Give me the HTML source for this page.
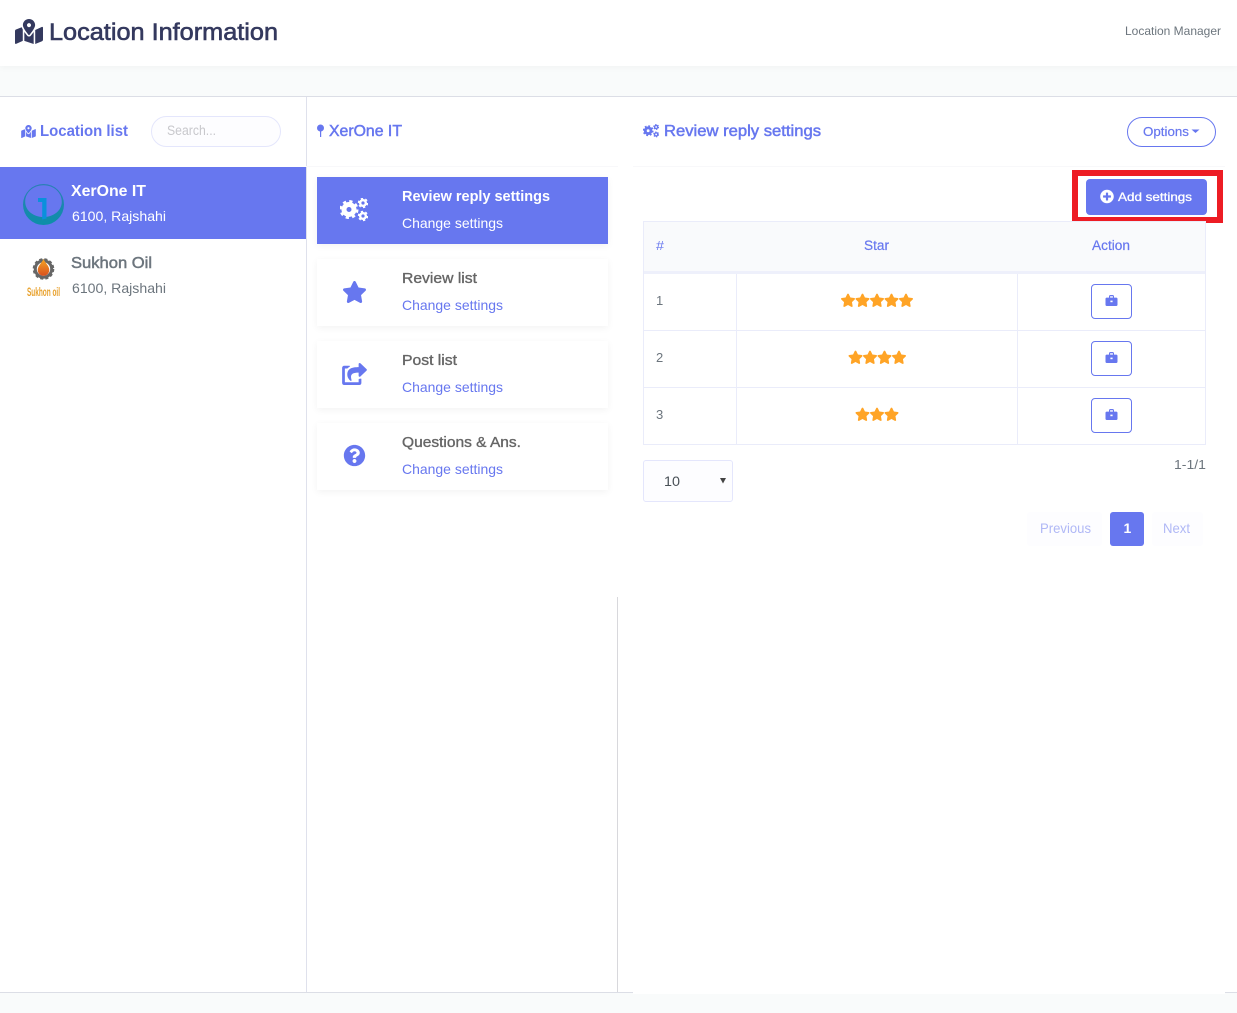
<!DOCTYPE html>
<html lang="en">
<head>
<meta charset="utf-8">
<title>Location Information</title>
<style>
html,body{margin:0;padding:0;background:#f9fbfb}
#page{position:relative;width:1237px;height:1013px;overflow:hidden;background:#f9fbfb;font-family:"Liberation Sans",sans-serif}
.b{position:absolute;box-sizing:border-box}
.card{background:#fff;box-shadow:0 2px 7px rgba(0,0,0,.05)}
svg{position:absolute;left:0;top:0}
text{font-family:"Liberation Sans",sans-serif}
.s{stroke:currentColor;stroke-width:.35px}
</style>
</head>
<body>
<div id="page">
  <div class="b" style="left:0;top:0;width:1237px;height:66px;background:#fff;box-shadow:0 2px 6px rgba(0,0,0,.03)"></div>
  <div class="b" style="left:0;top:96px;width:1237px;height:897px;background:#fff;border-top:1px solid #dcdee6;border-bottom:1px solid #dcdee6"></div>
  <div class="b" style="left:633px;top:97px;width:592px;height:897px;background:#fff"></div>
  <div class="b" style="left:306px;top:97px;width:1px;height:895px;background:#dfe1ec"></div>
  <div class="b" style="left:617px;top:597px;width:1px;height:395px;background:#d8d8dc"></div>
  <div class="b" style="left:306px;top:166px;width:312px;height:1px;background:#f8f8fa"></div>
  <div class="b" style="left:633px;top:166px;width:592px;height:1px;background:#f8f8fa"></div>

  <div class="b" style="left:151px;top:116px;width:130px;height:31px;border:1px solid #e4e6fc;border-radius:16px;background:#fdfdff"></div>
  <div class="b" style="left:0;top:167px;width:306px;height:72px;background:#6777ef"></div>

  <div class="b" style="left:317px;top:177px;width:291px;height:67px;background:#6777ef;box-shadow:0 2px 7px rgba(0,0,0,.05)"></div>
  <div class="b card" style="left:317px;top:259px;width:291px;height:67px"></div>
  <div class="b card" style="left:317px;top:341px;width:291px;height:67px"></div>
  <div class="b card" style="left:317px;top:423px;width:291px;height:67px"></div>

  <div class="b" style="left:1127px;top:117px;width:89px;height:30px;border:1px solid #6777ef;border-radius:15px"></div>
  <div class="b" style="left:1072px;top:170px;width:151px;height:53px;border:6px solid #ed1c24"></div>
  <div class="b" style="left:1086px;top:179px;width:121px;height:36px;background:#6777ef;border-radius:4px"></div>

  <!-- table -->
  <div class="b" style="left:643px;top:221px;width:563px;height:224px;border:1px solid #eaecfa"></div>
  <div class="b" style="left:644px;top:222px;width:561px;height:49px;background:#f9fafc"></div>
  <div class="b" style="left:644px;top:271px;width:561px;height:3px;background:#eef0fb"></div>
  <div class="b" style="left:736px;top:274px;width:1px;height:170px;background:#eaecfa"></div>
  <div class="b" style="left:1017px;top:274px;width:1px;height:170px;background:#eaecfa"></div>
  <div class="b" style="left:644px;top:330px;width:561px;height:1px;background:#eaecfa"></div>
  <div class="b" style="left:644px;top:387px;width:561px;height:1px;background:#eaecfa"></div>
  <div class="b" style="left:1091px;top:284px;width:41px;height:35px;border:1px solid #6777ef;border-radius:4px"></div>
  <div class="b" style="left:1091px;top:341px;width:41px;height:35px;border:1px solid #6777ef;border-radius:4px"></div>
  <div class="b" style="left:1091px;top:398px;width:41px;height:35px;border:1px solid #6777ef;border-radius:4px"></div>

  <div class="b" style="left:643px;top:460px;width:90px;height:42px;border:1px solid #e4e6fc;border-radius:3px;background:#fdfdff"></div>
  <div class="b" style="left:1027px;top:512px;width:75px;height:34px;background:#fdfdff;border-radius:3px"></div>
  <div class="b" style="left:1110px;top:512px;width:34px;height:34px;background:#6777ef;border-radius:3px"></div>
  <div class="b" style="left:1152px;top:512px;width:51px;height:34px;background:#fdfdff;border-radius:3px"></div>

  <svg width="1237" height="1013" viewBox="0 0 1237 1013" xmlns="http://www.w3.org/2000/svg">
    <defs>
      <symbol id="map" viewBox="0 0 576 512"><path fill="currentColor" d="M288 0c-69.59 0-126 56.41-126 126 0 56.26 82.35 158.8 113.9 196.02 6.39 7.54 17.82 7.54 24.2 0C331.65 284.8 414 182.26 414 126 414 56.41 357.59 0 288 0zm0 168c-23.2 0-42-18.8-42-42s18.8-42 42-42 42 18.8 42 42-18.8 42-42 42zM20.12 215.95A32.006 32.006 0 0 0 0 245.66v250.32c0 11.32 11.43 19.06 21.94 14.86L160 448V214.92c-8.84-15.98-16.07-31.54-21.25-46.42L20.12 215.95zM288 359.67c-14.07 0-27.38-6.18-36.51-16.96-19.66-23.2-40.57-49.62-59.49-76.72V448l192 64V266c-18.92 27.09-39.82 53.52-59.49 76.72-9.13 10.77-22.44 16.95-36.51 16.95zm266.06-198.51L416 224v288l139.88-55.95A31.996 31.996 0 0 0 576 426.34V176.02c0-11.32-11.43-19.06-21.94-14.86z"/></symbol>
      <symbol id="star" viewBox="0 0 576 512"><path fill="currentColor" d="M259.3 17.8L194 150.2 47.9 171.5c-26.2 3.8-36.7 36.1-17.7 54.6l105.7 103-25 145.5c-4.5 26.3 23.2 46 46.4 33.7L288 439.6l130.7 68.7c23.2 12.2 50.9-7.4 46.4-33.7l-25-145.5 105.7-103c19-18.5 8.5-50.8-17.7-54.6L382 150.2 316.7 17.8c-11.7-23.6-45.6-23.9-57.4 0z"/></symbol>
      <symbol id="share" viewBox="0 0 576 512"><path fill="currentColor" d="M568.482 177.448L424.479 313.433C409.3 327.768 384 317.14 384 295.985v-71.963c-144.575.97-205.566 35.113-164.775 171.353 4.483 14.973-12.846 26.567-25.006 17.33C155.252 383.105 120 326.488 120 269.339c0-143.937 117.599-172.5 264-173.312V24.015c0-21.174 25.317-31.768 40.479-17.448l144.003 135.988c10.02 9.463 10.028 25.425 0 34.893zM384 379.128V448H64V128h50.916a11.99 11.99 0 0 0 8.648-3.693c14.953-15.568 32.237-27.89 51.014-37.676C186.708 80.284 182.213 64 168.285 64H48C21.49 64 0 85.49 0 112v352c0 26.51 21.49 48 48 48h352c26.51 0 48-21.49 48-48v-88.806c0-8.288-8.197-14.066-16.011-11.302-10.96 3.876-22.7 4.576-31.989 4.1z"/></symbol>
      <symbol id="q" viewBox="0 0 512 512"><path fill="currentColor" d="M504 256c0 136.997-111.043 248-248 248S8 392.997 8 256C8 119.083 119.043 8 256 8s248 111.083 248 248zM262.655 90c-54.497 0-89.255 22.957-116.549 63.758-3.536 5.286-2.353 12.415 2.715 16.258l34.699 26.31c5.205 3.947 12.621 3.008 16.665-2.122 17.864-22.658 30.113-35.797 57.303-35.797 20.429 0 45.698 13.148 45.698 32.958 0 14.976-12.363 22.667-32.534 33.976C247.128 238.528 216 254.941 216 296v4c0 6.627 5.373 12 12 12h56c6.627 0 12-5.373 12-12v-1.333c0-28.462 83.186-29.647 83.186-106.667 0-58.002-60.165-102-116.531-102zM256 338c-25.365 0-46 20.635-46 46 0 25.364 20.635 46 46 46s46-20.636 46-46c0-25.365-20.635-46-46-46z"/></symbol>
      <symbol id="plus" viewBox="0 0 512 512"><path fill="currentColor" d="M256 8C119 8 8 119 8 256s111 248 248 248 248-111 248-248S393 8 256 8zm144 276c0 6.6-5.4 12-12 12h-92v92c0 6.6-5.4 12-12 12h-56c-6.6 0-12-5.4-12-12v-92h-92c-6.6 0-12-5.4-12-12v-56c0-6.6 5.4-12 12-12h92v-92c0-6.6 5.4-12 12-12h56c6.6 0 12 5.4 12 12v92h92c6.6 0 12 5.4 12 12v56z"/></symbol>
      <symbol id="cogs" viewBox="0 0 28 24">
        <g fill="none" stroke="currentColor">
          <circle cx="9" cy="11.5" r="5" stroke-width="5"/>
          <circle cx="9" cy="11.5" r="8.2" stroke-width="2.6" stroke-dasharray="3.22 3.22"/>
          <circle cx="23" cy="5" r="2.8" stroke-width="2.4"/>
          <circle cx="23" cy="5" r="4.4" stroke-width="1.6" stroke-dasharray="2.3 2.3"/>
          <circle cx="23" cy="18" r="2.8" stroke-width="2.4"/>
          <circle cx="23" cy="18" r="4.4" stroke-width="1.6" stroke-dasharray="2.3 2.3"/>
        </g>
      </symbol>
      <symbol id="case" viewBox="0 0 12 11">
        <path fill="currentColor" d="M3.5 3V1.4C3.5.6 4.1 0 4.9 0h2.2c.8 0 1.4.6 1.4 1.4V3H7.4V1.2H4.6V3zM1.2 2.6h9.6c.7 0 1.2.5 1.2 1.2v6c0 .7-.5 1.2-1.2 1.2H1.2C.5 11 0 10.5 0 9.8v-6c0-.7.5-1.2 1.2-1.2z"/>
        <rect x="4.9" y="5.6" width="2.2" height="1.6" fill="#fff"/>
      </symbol>
      <linearGradient id="xg" x1="0" y1="0" x2="0" y2="1"><stop offset="0" stop-color="#2a7fb5"/><stop offset="1" stop-color="#0c8fa8"/></linearGradient>
      <linearGradient id="dg" x1="0" y1="0" x2="0" y2="1"><stop offset="0" stop-color="#f5a623"/><stop offset="1" stop-color="#d9501e"/></linearGradient>
    </defs>

    <!-- header -->
    <use href="#map" x="15" y="19" width="28" height="25" color="#34395e"/>
    <text x="49" y="40" font-size="24" fill="#34395e" class="s" color="#34395e" textLength="229" lengthAdjust="spacingAndGlyphs" style="stroke-width:.6px">Location Information</text>
    <text x="1125" y="35" font-size="12" fill="#6c757d" textLength="96" lengthAdjust="spacingAndGlyphs">Location Manager</text>

    <!-- left column -->
    <use href="#map" x="21" y="125" width="15" height="13" color="#6777ef"/>
    <text x="40" y="136" font-size="16" font-weight="700" fill="#6777ef" textLength="88" lengthAdjust="spacingAndGlyphs">Location list</text>
    <text x="167" y="135" font-size="13.5" fill="#c8c8cc" textLength="49" lengthAdjust="spacingAndGlyphs">Search...</text>

    <path fill="url(#xg)" fill-rule="evenodd" d="M43.5 184a20.5 20.5 0 1 0 0 41 20.5 20.500 0 0 0 0-41zm0 1.200c10.300 0 18.300 7.300 18.300 16.500 0 8.800-8.300 15.300-18.300 15.300s-18.300-6.500-18.300-15.300c0-9.200 8-16.500 18.300-16.500z"/>
    <path fill="#0a90dc" d="M38 198h8.500v20.500l-4.300 1v-17.500h-4.200z"/>
    <text x="71" y="196" font-size="16" font-weight="700" fill="#fff" textLength="75" lengthAdjust="spacingAndGlyphs">XerOne IT</text>
    <text x="72" y="221" font-size="14" fill="#fff" textLength="94" lengthAdjust="spacingAndGlyphs">6100, Rajshahi</text>

    <circle cx="43.5" cy="269" r="8.2" fill="none" stroke="#666" stroke-width="3"/>
    <circle cx="43.5" cy="269" r="10" fill="none" stroke="#666" stroke-width="1.6" stroke-dasharray="3.1 2.2"/>
    <path fill="url(#dg)" d="M43.5 259c1.500 3.500 5.800 7 5.800 11a5.800 5.800 0 0 1-11.600 0c0-4 4.300-7.500 5.800-11z"/>
    <text x="27" y="296" font-size="12" font-weight="700" fill="#e8a02a" textLength="33" lengthAdjust="spacingAndGlyphs">Sukhon oil</text>
    <text x="71" y="268" font-size="16" fill="#6c757d" class="s" color="#6c757d" textLength="81" lengthAdjust="spacingAndGlyphs" style="stroke-width:.5px">Sukhon Oil</text>
    <text x="72" y="293" font-size="14" fill="#6c757d" textLength="94" lengthAdjust="spacingAndGlyphs">6100, Rajshahi</text>

    <!-- middle column -->
    <circle cx="320.5" cy="128" r="3.5" fill="#6777ef"/>
    <rect x="320" y="130" width="1.2" height="7" fill="#6777ef"/>
    <text x="329" y="136" font-size="16" fill="#6777ef" class="s" color="#6777ef" textLength="73" lengthAdjust="spacingAndGlyphs" style="stroke-width:.5px">XerOne IT</text>

    <use href="#cogs" x="340" y="198" width="28" height="24" color="#fff"/>
    <text x="402" y="201" font-size="14.5" font-weight="700" fill="#fff" textLength="148" lengthAdjust="spacingAndGlyphs">Review reply settings</text>
    <text x="402" y="228" font-size="14" fill="#fff" textLength="101" lengthAdjust="spacingAndGlyphs">Change settings</text>

    <use href="#star" x="342" y="281" width="25" height="22" color="#6777ef"/>
    <text x="402" y="283" font-size="14.5" fill="#666" class="s" color="#666" textLength="75" lengthAdjust="spacingAndGlyphs">Review list</text>
    <text x="402" y="310" font-size="14" fill="#6777ef" textLength="101" lengthAdjust="spacingAndGlyphs">Change settings</text>

    <use href="#share" x="342" y="363" width="25" height="22" color="#6777ef"/>
    <text x="402" y="365" font-size="14.5" fill="#666" class="s" color="#666" textLength="55" lengthAdjust="spacingAndGlyphs">Post list</text>
    <text x="402" y="392" font-size="14" fill="#6777ef" textLength="101" lengthAdjust="spacingAndGlyphs">Change settings</text>

    <use href="#q" x="343.5" y="444.5" width="22" height="22" color="#6777ef"/>
    <text x="402" y="447" font-size="14.5" fill="#666" class="s" color="#666" textLength="119" lengthAdjust="spacingAndGlyphs">Questions &amp; Ans.</text>
    <text x="402" y="474" font-size="14" fill="#6777ef" textLength="101" lengthAdjust="spacingAndGlyphs">Change settings</text>

    <!-- right column -->
    <use href="#cogs" x="643" y="124" width="16" height="14" color="#6777ef"/>
    <text x="664" y="136" font-size="16" fill="#6777ef" class="s" color="#6777ef" textLength="157" lengthAdjust="spacingAndGlyphs" style="stroke-width:.5px">Review reply settings</text>
    <text x="1143" y="136" font-size="12.5" fill="#6777ef" class="s" color="#6777ef" textLength="46" lengthAdjust="spacingAndGlyphs" style="stroke-width:.2px">Options</text>
    <path d="M1191.5 129.500h8l-4 3.500z" fill="#6777ef"/>

    <use href="#plus" x="1100" y="189.5" width="14" height="14" color="#fff"/>
    <text x="1118" y="201" font-size="12" fill="#fff" class="s" color="#fff" textLength="74" lengthAdjust="spacingAndGlyphs" style="stroke-width:.3px">Add settings</text>

    <text x="656" y="250" font-size="13" fill="#6777ef" textLength="8" lengthAdjust="spacingAndGlyphs">#</text>
    <text x="864" y="250" font-size="13.5" fill="#6777ef" class="s" color="#6777ef" style="stroke-width:.2px" textLength="25" lengthAdjust="spacingAndGlyphs">Star</text>
    <text x="1092" y="250" font-size="13.5" fill="#6777ef" class="s" color="#6777ef" style="stroke-width:.2px" textLength="38" lengthAdjust="spacingAndGlyphs">Action</text>

    <text x="656" y="305" font-size="13" fill="#6c757d">1</text>
    <text x="656" y="362" font-size="13" fill="#6c757d">2</text>
    <text x="656" y="419" font-size="13" fill="#6c757d">3</text>

    <g color="#ffa426">
      <use href="#star" x="840.5" y="293.5" width="15" height="13.5"/>
      <use href="#star" x="855" y="293.5" width="15" height="13.5"/>
      <use href="#star" x="869.5" y="293.5" width="15" height="13.5"/>
      <use href="#star" x="884" y="293.5" width="15" height="13.5"/>
      <use href="#star" x="898.5" y="293.5" width="15" height="13.5"/>

      <use href="#star" x="848" y="350.5" width="15" height="13.5"/>
      <use href="#star" x="862.5" y="350.5" width="15" height="13.5"/>
      <use href="#star" x="877" y="350.5" width="15" height="13.5"/>
      <use href="#star" x="891.5" y="350.5" width="15" height="13.5"/>

      <use href="#star" x="855" y="407.5" width="15" height="13.5"/>
      <use href="#star" x="869.5" y="407.5" width="15" height="13.5"/>
      <use href="#star" x="884" y="407.5" width="15" height="13.5"/>
    </g>

    <use href="#case" x="1105.5" y="295" width="12" height="11" color="#6777ef"/>
    <use href="#case" x="1105.5" y="352" width="12" height="11" color="#6777ef"/>
    <use href="#case" x="1105.5" y="409" width="12" height="11" color="#6777ef"/>

    <text x="664" y="486" font-size="14" fill="#495057" textLength="16" lengthAdjust="spacingAndGlyphs">10</text>
    <path d="M720 478h6l-3 5.5z" fill="#444"/>
    <text x="1174" y="469" font-size="13" fill="#6c757d" textLength="32" lengthAdjust="spacingAndGlyphs">1-1/1</text>

    <text x="1040" y="533" font-size="14" fill="#b0b8f6" textLength="51" lengthAdjust="spacingAndGlyphs">Previous</text>
    <text x="1123.5" y="533" font-size="14" font-weight="700" fill="#fff">1</text>
    <text x="1163" y="533" font-size="14" fill="#b0b8f6" textLength="27" lengthAdjust="spacingAndGlyphs">Next</text>
  </svg>
</div>
</body>
</html>
